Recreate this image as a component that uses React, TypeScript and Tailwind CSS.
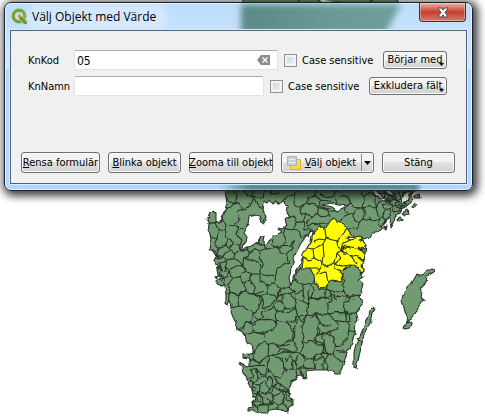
import type { ReactNode } from "react";

const MAINLAND =
  "M225 180 L225 192 227 203 224 213 223 220 219 222 216 222 216 214 213 211 209 212 207 219 210 224 209 232 211 238 209 250 213 250 214 253 217 256 214 260 215 263 219 264 219 267 217 269 218 274 221 275 221 278 217 280 217 284 220 285 222 287 225 286 226 296 226 303 228 305 230 300 232 306 231 312 233 317 236 323 237 329 241 330 245 334 246 340 248 343 252 344 253 350 253 353 249 356 247 354 244 355 244 358 248 359 250 363 250 366 246 367 243 364 239 362 242 367 243 373 246 376 248 382 250 387 252 390 253 395 255 399 252 402 253 408 248 409 248 411 255 411 263 413 268 413 270 410 275 409 282 410 288 412 290 407 293 405 293 400 289 396 289 388 292 381 297 377 301 376 304 379 307 378 306 373 305 371 315 370 325 370 332 370 335 371 335 374 339 374 342 368 344 362 347 352 350 350 352 342 355 332 356 324 358 320 356 313 360 309 362 303 360 297 363 293 361 290 363 285 358 280 363 277 360 273 363 270 362 262 365 254 366 244 358 238 355 238 362 239 370 237 372 233 376 233 380 230 383 226 386 223 388 216 390 222 391 228 394 223 395 217 400 213 402 208 408 205 413 199 412 194 420 180 Z";

const NORTH_WEST = [
  "M80 50 L100 72 115 68 130 86 150 78 160 58 158 36 M100 72 L90 84 76 90",
  "M104 30 L108 55 100 72 M134 30 L140 46 162 50 190 52 192 30 M162 50 L170 75 188 86",
  "M72 92 L66 110 78 132 104 138 118 120 110 94 130 86 M104 138 L120 146 132 140",
  "M25 130 L45 128 68 120 M45 128 L55 150 75 152 78 132 M32 172 L52 176 55 150",
  "M52 176 L44 188 58 205 78 196 88 206 100 190 120 196 126 180 110 165 120 146",
  "M75 152 L84 178 78 196 M84 178 L98 186 100 190 M35 205 L46 212 58 205 50 224 68 226 76 218",
  "M76 218 L92 212 104 222 120 208 142 213 150 220 166 208 M120 196 L116 212 104 222",
  "M68 226 L78 240 102 236 104 222 M54 250 L70 246 78 240 76 260 90 272 110 258 132 256 134 236 150 220",
  "M44 236 L60 234 68 226 M60 252 L66 276 78 272 76 260 M58 296 L72 298 84 290 90 272",
  "M102 236 L118 246 132 256 136 274 156 282 180 282 186 260 166 242 150 238 134 236",
  "M166 208 L180 216 200 210 230 204 240 218 258 224 266 246 248 256 230 270 226 290 204 288 180 282",
  "M180 216 L178 236 190 250 186 260 M142 213 L136 195 150 190 170 188 182 196 192 194 200 210",
  "M188 86 L194 106 190 126 M182 170 L176 186 182 196 M220 178 L212 192 230 204 250 196 272 196 284 180",
  "M258 146 L250 160 256 178 250 196 M284 180 L276 202 258 224 M258 146 L278 150 298 154 304 174 326 160",
  "M210 30 L216 42 232 40 238 32 M250 60 L266 48 284 44 296 30 M284 44 L286 72 300 82 320 72 324 50 344 46 350 30",
  "M264 112 L274 106 286 114 292 130 278 150 M300 82 L302 102 318 100 334 112 352 100 356 80 344 74 320 72",
  "M318 100 L310 124 312 150 334 144 M352 100 L366 110 390 108 M334 112 L316 128 324 140 340 130 360 134 390 126",
  "M344 46 L362 60 390 64 M362 60 L356 80 390 88 M292 130 L312 128",
  "M90 272 L98 294 120 290 136 274 M98 294 L84 316 92 334 112 344 136 330 132 308 120 290",
  "M132 308 L150 300 156 282 M150 300 L166 322 160 340 180 352 202 340 200 314 180 304 180 282",
  "M200 314 L226 308 226 290 M226 308 L240 330 232 350 M240 330 L268 322 272 304 M268 322 L286 340 306 334 310 312 284 300 272 304",
  "M284 300 L290 280 306 264 M310 312 L334 314 344 300 M306 334 L310 360 M334 314 L340 334 330 360 M72 298 L76 318",
  "M136 330 L150 342 160 340 M92 334 L88 360 M180 352 L180 360 M202 340 L232 350 228 360 M54 260 L66 266 56 286 70 292 64 308 M48 218 L54 238 72 232",
];

const NORTH_EAST = [
  "M0 40 L20 50 44 46 54 32 M44 46 L52 76 M52 76 L78 78 94 68 82 50 62 46 M94 68 L100 82 130 84 132 46 120 30",
  "M132 46 L148 40 168 46 168 84 142 80 130 84 M168 84 L178 64 190 72 204 66 M130 84 L106 88 102 102 76 96 78 78",
  "M0 78 L14 84 26 98 34 114 M26 98 L44 90 52 76 M60 124 L70 110 90 100 102 102 M102 102 L104 120 118 126 112 146 94 146",
  "M118 126 L132 118 136 98 130 84 M132 118 L154 124 178 118 172 98 168 84 M178 118 L176 134 188 146 M154 124 L146 110",
  "M190 72 L196 92 188 106 178 118 M196 92 L208 88 212 108 M204 66 L214 82 226 76 230 60 218 48 M214 82 L222 98 236 96 242 78 226 76",
  "M168 46 L180 54 204 66 206 46 194 36 M206 46 L218 48 232 40 M218 48 L226 62 246 58 250 38 M246 58 L258 74 M236 32 L242 54 266 62",
  "M186 30 L196 48 184 58 M208 34 L214 56 202 70 M220 68 L240 72 254 84 M200 76 L214 72 228 88 M250 50 L270 46 276 34 M230 80 L246 88",
  "M170 30 L176 44 188 40 M224 34 L230 52 216 62 M198 60 L212 64 222 54 236 66 250 66 M188 106 L198 116 196 130 M94 146 L86 152",
  "M66 274 L78 264 92 252 M66 274 L74 302 66 318 78 350 76 360 M22 306 L44 304 66 302 M0 326 L22 328 46 336 74 334",
  "M22 306 L24 328 12 344 14 360 M46 336 L42 352 50 360 M100 360 L108 348 126 346 M78 350 L100 344 108 348",
];

const SOUTH_WEST = [
  "M80 12 L98 8 112 14 138 4 160 14 188 4 M112 14 L116 48 96 54 M116 48 L140 58 160 70 176 56 186 24 160 14",
  "M160 70 L154 92 138 98 130 114 110 114 M138 98 L160 98 174 90 166 80 160 70 M186 24 L188 56 212 46 232 18 236 0",
  "M174 90 L190 82 184 66 206 60 224 48 M174 90 L200 88 220 90 230 104 222 120 192 130 160 126 154 108 170 100",
  "M232 18 L246 10 246 34 232 32 220 44 230 66 246 62 M246 34 L254 52 282 54 288 30 270 14 246 10 M246 62 L254 52",
  "M230 66 L228 94 254 98 270 106 280 124 278 150 M228 94 L230 104 M254 98 L282 92 290 78 284 54 M246 62 L266 68 286 54",
  "M288 30 L306 34 326 42 322 74 296 84 290 78 M326 42 L330 22 350 26 390 24 M322 74 L352 72 390 76 M326 42 L324 0 M286 0 L288 30",
  "M270 14 L286 0 M296 84 L310 94 302 112 312 140 306 154 312 170 302 184 M290 84 L284 112 284 144 278 150 M322 74 L310 94",
  "M352 72 L358 98 348 116 354 134 344 152 320 156 306 154 M358 98 L376 108 390 102 M354 134 L376 130 390 138 M344 152 L364 158 376 170",
  "M192 130 L194 156 206 166 228 160 242 168 266 150 278 150 M194 156 L172 168 158 192 M206 166 L204 198 178 216 160 208 146 212",
  "M228 160 L238 176 228 194 204 198 M238 176 L266 184 302 190 M242 168 L270 164 M278 150 L292 174 284 184 M228 194 L252 186 306 192",
  "M133 134 L164 126 192 134 M158 192 L162 206 178 216 M302 184 L316 208 310 230 288 234 286 216 298 198 M310 190 L314 206 342 208 348 196 370 190 366 158",
  "M342 208 L346 234 320 236 310 230 M366 194 L376 212 364 228 370 240 M370 158 L378 180 370 190 390 188",
  "M204 198 L206 236 222 262 240 264 252 240 250 216 236 202 204 198 M252 204 L262 212 268 196 278 210 278 234 256 244 250 230 M278 210 L286 216",
  "M178 216 L176 226 192 226 202 240 196 256 182 254 170 236 154 238 M150 230 L176 226 M154 238 L158 264 146 268 M170 236 L174 266 158 280 158 302 M174 266 L196 256",
  "M196 256 L204 264 200 284 206 300 216 286 218 268 204 258 M206 236 L206 252 M222 262 L232 274 218 290 242 302 240 278 232 274 M240 278 L270 304",
  "M158 280 L180 286 196 276 M180 286 L178 302 196 310 206 300 M158 302 L178 302 168 322 154 320 M178 302 L176 318 198 322 212 338 206 346 190 344 172 332 168 322",
  "M218 290 L212 308 222 318 244 308 242 302 M222 318 L216 338 236 344 252 326 248 308 266 306 268 320 M252 326 L246 342 262 350 270 364 M216 338 L206 346 204 366",
  "M172 332 L156 338 172 348 190 344 M154 346 L172 348 174 360 M236 344 L232 358 M256 308 L260 330 276 334 M288 234 L290 262 M300 234 L302 250 312 262",
  "M242 302 L264 304 M212 308 L196 310 M148 272 L160 276 M154 290 L172 294 M164 310 L182 314 184 336 M190 320 L192 344 M210 346 L226 340",
];

const SOUTH_EAST = [
  "M0 24 L20 28 48 24 64 12 58 0 M64 12 L82 20 104 18 114 12 118 22 148 14 M64 12 L66 30 54 38 54 72",
  "M118 22 L116 34 102 40 100 66 118 70 M0 84 L20 72 54 72 80 68 106 68 138 70 M20 72 L26 96 22 110 30 122 26 136",
  "M54 72 L64 84 78 92 84 102 82 118 58 124 44 132 26 136 M80 92 L106 96 110 84 106 68 M106 96 L118 110 116 122 136 126",
  "M118 70 L120 98 106 96 M58 124 L60 136 74 140 70 156 80 170 94 168 102 152 112 148 116 122 M26 136 L16 142 20 164 0 154",
  "M20 164 L40 166 44 154 38 142 44 132 M40 166 L42 188 54 192 70 190 76 168 M42 188 L34 194 10 198 2 210 M76 184 L106 188",
  "M54 192 L48 206 38 214 54 226 50 240 M70 190 L80 204 96 216 104 216 M10 198 L14 226 16 240 M14 208 L36 206 34 194 M110 64 L112 84",
];

const Lines = ({ at, d }: { at: string; d: string[] }) => (
  <g transform={`translate(${at}) scale(0.3333)`}>
    <path d={d.join(" ")} strokeWidth="3.3" fill="none" />
  </g>
);

function CountyMap() {
  return (
    <svg
      className="absolute top-0 left-0"
      width="485"
      height="420"
      viewBox="0 0 485 420"
      stroke="#2a352b"
      strokeWidth="1.1"
      strokeLinejoin="round"
      fill="#719b71"
      aria-label="Karta"
    >
      <filter id="ragged" x="0" y="0" width="485" height="420" filterUnits="userSpaceOnUse" colorInterpolationFilters="sRGB">
        <feTurbulence type="fractalNoise" baseFrequency="0.15" numOctaves="1" seed="4" result="noise" />
        <feDisplacementMap in="SourceGraphic" in2="noise" scale="5" xChannelSelector="R" yChannelSelector="G" />
      </filter>
      <path d="M243 -2 H398 L396 12 H243 Z M298 -2 L300 6 M316 -2 L322 3 340 2 350 6 M366 4 L376 -2" />
      <g filter="url(#ragged)">
        <path d={MAINLAND} />
        <Lines at="200 180" d={NORTH_WEST} />
        <Lines at="320 180" d={NORTH_EAST} />
        <Lines at="200 290" d={SOUTH_WEST} />
        <Lines at="310 290" d={SOUTH_EAST} />
        <g fill="#fff">
          <path d="M264 201 L268 203 270 200 273 204 276 201 279 204 282 201 284 201 285 205 288 206 287 214 289 216 285 219 287 225 283 229 278 228 282 232 278 234 273 236 268 240 265 245 263 243 264 236 261 236 257 243 251 246 247 247 241 250 242 246 246 242 247 237 244 233 246 227 249 224 250 217 254 215 259 216 261 222 264 224 266 220 263 210 264 204 Z" />
          <path d="M311 230 L309 236 306 236 301 243 297 251 294 259 291 269 289 278 291 284 294 277 299 267 303 256 307 249 311 241 313 232 Z" />
          <path d="M322 205 L330 203 338 205 348 206 343 208 337 211 332 207 Z M371 190 L378 191 382 197 389 199 383 200 377 196 Z M381 186 L390 190 395 196 388 194 Z M404 194 L410 190 407 201 401 203 Z" />
        </g>
        <path
          d="M331 220 L335 218 337 222 343 224 347 229 351 235 355 237 361 236 362 239 359 240 363 241 366 245 364 249 358 247 362 251 365 254 364 259 358 257 361 260 364 262 361 266 363 270 361 272 357 267 353 264 350 267 345 267 342 270 343 277 341 282 332 280 328 282 326 287 320 288 315 283 314 276 310 268 302 268 303 261 303 254 307 248 312 240 312 236 316 230 319 226 325 229 Z"
          fill="#ffff00"
        />
        <path
          d="M325 229 L326 238 336 241 340 238 347 229 M326 238 L323 244 324 256 323 263 327 267 335 262 337 253 342 250 352 257 356 264 M336 241 L337 246 342 250 344 243 352 239 348 236 M342 250 L346 246 356 248 363 250 M344 254 L358 257 M337 253 L341 258 336 263 341 266 351 265 M307 248 L313 249 314 258 308 260 303 257 M313 249 L323 244 M314 241 L319 239 326 240 M314 258 L323 263 321 268 310 268 M321 268 L316 275 326 272 328 282 M335 262 L335 269 342 273"
          fill="none"
        />
        <path d="M347 238 L352 237 356 239 350 240 Z" fill="#fff" />
        <path d="M429 270 L426 270 424 273 419 275 417 274 412 283 407 288 403 294 402 300 404 309 407 317 408 320 413 317 416 311 419 308 419 303 425 300 421 297 422 291 421 288 426 283 427 276 434 272 435 270 431 269 Z" />
        <path d="M407 320 L411 323 410 327 406 329 404 328 406 324 Z M371 307 L375 308 372 313 371 320 367 328 364 334 362 344 360 352 358 361 356 369 354 368 354 353 356 343 360 336 363 329 366 320 369 314 Z M357 338 L362 343" />
        <path d="M397 220 L400 217 403 219 399 222 Z M402 213 L407 210 408 214 405 215 Z M412 207 L415 203 417 204 414 208 Z M414 196 L419 194 420 198 416 198 Z M401 205 L406 203 406 207 Z M384 227 L387 226 386 229 Z" />
        <path d="M216 257 L219 255 219 259 Z M217 268 L219 266 220 270 Z M216 276 L218 275 218 278 Z" />
      </g>
    </svg>
  );
}

const face =
  "border border-[#707070] rounded-[3px] bg-linear-to-b from-[#f3f3f3] from-50% via-[#e2e2e2] via-50% to-[#d0d0d0] shadow-[inset_0_0_0_1px_#fafafa] whitespace-nowrap";

function ActionButton({ children, size }: { children: ReactNode; size: string }) {
  return (
    <button type="button" className={`flex h-[21px] items-center justify-center pt-px ${face} ${size}`}>
      <span>{children}</span>
    </button>
  );
}

function MenuButton({ label, size }: { label: string; size: string }) {
  return (
    <button type="button" className={`relative flex h-[18px] shrink-0 items-center justify-center ${face} ${size}`}>
      {label}
      <svg className="absolute right-[2px] bottom-[2px]" width="5" height="3" viewBox="0 0 5 3" aria-hidden="true">
        <path d="M0 0H5L2.5 3Z" />
      </svg>
    </button>
  );
}

type FieldProps = { id: string; label: string; value?: string; menu: string; menuSize: string };

function FieldRow({ id, label, value = "", menu, menuSize }: FieldProps) {
  return (
    <div className="flex h-5 items-center">
      <label htmlFor={id} className="w-[46px] shrink-0 pt-[2px]">
        {label}
      </label>
      <div className="relative flex h-5 min-w-0 flex-1">
        <input
          id={id}
          defaultValue={value}
          className="w-full min-w-0 rounded-[2px] border border-[#e2e3ea] border-t-[#abadb3] bg-white px-[2px] pt-px text-[12px] outline-none"
        />
        {value && (
          <button type="button" aria-label="Rensa" className="absolute top-[5px] right-[8px]">
            <svg width="13" height="10" viewBox="0 0 13 10">
              <path d="M0 5L4 0H13V10H4Z" fill="#8b8b8b" />
              <path d="M5.5 2.5L10.5 7.5M10.5 2.5L5.5 7.5" stroke="#fff" strokeWidth="1.3" />
            </svg>
          </button>
        )}
      </div>
      <input
        id={`${id}-case`}
        type="checkbox"
        className="ml-[6px] size-[13px] shrink-0 appearance-none border border-[#8e8f8f] bg-linear-to-br from-[#cbcfd5] to-[#f6f6f6] shadow-[inset_0_0_0_2px_#f4f4f4]"
      />
      <label htmlFor={`${id}-case`} className="w-[86px] shrink-0 pt-px pl-[5px] whitespace-nowrap">
        Case sensitive
      </label>
      <MenuButton label={menu} size={menuSize} />
    </div>
  );
}

function TitleBar() {
  return (
    <header className="relative flex h-[27px] items-center pl-px">
      <svg width="17" height="17" viewBox="0 0 17 17" aria-hidden="true">
        <circle cx="8" cy="8" r="5.8" fill="none" stroke="#76a62d" strokeWidth="3.4" />
        <path d="M7.5 7L11 8 16.5 13.5V16.5H13L8 11Z" fill="#579b30" stroke="#eef6e5" strokeWidth=".6" />
        <circle cx="8.5" cy="8" r="1.8" fill="#ee8b32" />
      </svg>
      <h1 className="ml-[2px] rounded-full bg-white/30 pr-2 pl-[2px] font-['Open_Sans',sans-serif] text-[12px] leading-5 shadow-[0_0_6px_4px_rgba(255,255,255,0.3)]">
        Välj Objekt med Värde
      </h1>
      <button
        type="button"
        aria-label="Stäng fönster"
        className="absolute top-0 right-[1px] flex h-[19px] w-[47px] items-center justify-center rounded-b-[4px] border border-t-0 border-[#5c2525] bg-linear-to-b from-[#e3a89c] from-5% via-[#c63e2c] via-50% to-[#d7796c] shadow-[inset_0_0_0_1px_rgba(255,255,255,0.35)]"
      >
        <svg width="12" height="11" viewBox="0 0 12 11" aria-hidden="true">
          <path d="M1 1H4.5L6 3.2 7.5 1H11L8 5.5 11 10H7.5L6 7.8 4.5 10H1L4 5.5Z" fill="#fff" stroke="#59485a" />
        </svg>
      </button>
    </header>
  );
}

export default function App() {
  return (
    <main className="relative min-h-[420px] overflow-hidden bg-white font-['DejaVu_Sans_Condensed','DejaVu_Sans','Noto_Sans',sans-serif] text-[11px] leading-[14px] text-black">
      <CountyMap />
      <section
        role="dialog"
        aria-label="Välj Objekt med Värde"
        className="absolute top-[2px] right-[12px] left-[4px] overflow-hidden rounded-[7px] border border-[#17222d] bg-linear-to-b from-[#bddcfb] from-0% via-[#d3e8fc] via-35% to-[#b2d6fb] to-36% px-[5px] pb-[6px] shadow-[inset_0_0_0_1px_#e7f4ff,2px_2px_9px_3px_rgba(0,0,0,0.75)]"
      >
        <div className="absolute top-[1px] left-[236px] blur-[3px]">
          <div className="h-[30px] w-[160px] bg-linear-to-r from-[#5b8987] via-[#6b9a97] via-60% to-[#6f9d9b] [clip-path:polygon(0_0,100%_0,90%_100%,0_100%)]" />
        </div>
        <div className="absolute bottom-0 left-[214px] h-[6px] w-[200px] bg-linear-to-r from-transparent via-[#447b7c] via-15% to-[#447b7c] blur-[2px]" />
        <TitleBar />
        <div className="relative border border-[#506477] bg-[#f0f0f0] pt-[19px] pb-[10px] shadow-[0_0_0_1px_#d9edff]">
          <form className="flex flex-col gap-[6px] pr-[19px] pl-[17px]">
            <FieldRow id="knkod" label="KnKod" value="05" menu="Börjar med" menuSize="w-[64px]" />
            <FieldRow id="knnamn" label="KnNamn" menu="Exkludera fält" menuSize="w-[78px]" />
          </form>
          <footer className="mt-[56px] flex justify-between pr-[11px] pl-[10px]">
            <ActionButton size="w-[79px]">
              <u>R</u>ensa formulär
            </ActionButton>
            <ActionButton size="w-[73px]">
              <u>B</u>linka objekt
            </ActionButton>
            <ActionButton size="w-[84px]">
              <u>Z</u>ooma till objekt
            </ActionButton>
            <div className={`flex h-[21px] w-[93px] ${face}`}>
              <button type="button" className="flex flex-1 items-center justify-center gap-1">
                <svg width="14" height="14" viewBox="0 0 14 14" aria-hidden="true">
                  <path d="M3.5 3.5H13.5V13.5H3.5Z" fill="#f7df48" stroke="#d5b62d" />
                  <path d="M.5 .5H9.5V9.5H.5Z" fill="#c8d0d4" stroke="#aab3b8" />
                  <path d="M2 3.5H8M2 6.5H8" stroke="#edf1f3" />
                </svg>
                <span className="pt-px">
                  <u>V</u>älj objekt
                </span>
              </button>
              <button type="button" aria-label="Fler val" className="my-px flex w-3 items-center justify-center border-l border-[#8b8b8b]">
                <svg width="7" height="4" viewBox="0 0 7 4" aria-hidden="true">
                  <path d="M0 0H7L3.5 4Z" />
                </svg>
              </button>
            </div>
            <ActionButton size="w-[73px]">Stäng</ActionButton>
          </footer>
        </div>
      </section>
    </main>
  );
}
